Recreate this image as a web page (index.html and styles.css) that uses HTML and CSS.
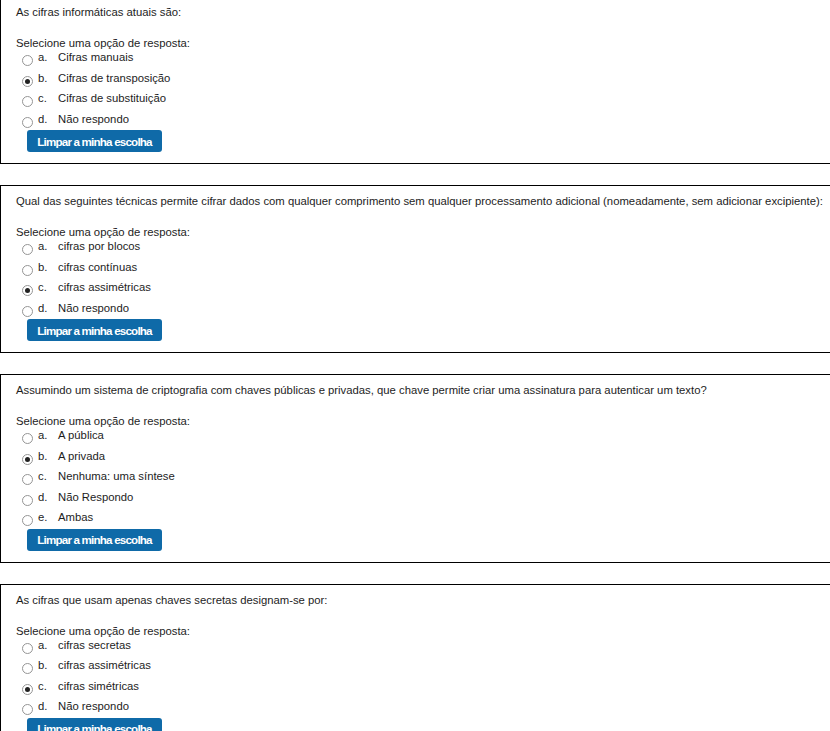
FILE: index.html
```html
<!DOCTYPE html>
<html lang="pt">
<head>
<meta charset="utf-8">
<title>Questionário</title>
<link rel="stylesheet" href="styles.css">
</head>
<body>
<div class="que">
  <div class="qtext">As cifras informáticas atuais são:</div>
  <div class="prompt">Selecione uma opção de resposta:</div>
  <div class="answer">
    <div class="opt"><span class="radio"></span><span class="letter">a.</span><span class="label">Cifras manuais</span></div>
    <div class="opt"><span class="radio checked"></span><span class="letter">b.</span><span class="label">Cifras de transposição</span></div>
    <div class="opt"><span class="radio"></span><span class="letter">c.</span><span class="label">Cifras de substituição</span></div>
    <div class="opt"><span class="radio"></span><span class="letter">d.</span><span class="label">Não respondo</span></div>
  </div>
  <button class="clear">Limpar a minha escolha</button>
</div>

<div class="que">
  <div class="qtext">Qual das seguintes técnicas permite cifrar dados com qualquer comprimento sem qualquer processamento adicional (nomeadamente, sem adicionar excipiente):</div>
  <div class="prompt">Selecione uma opção de resposta:</div>
  <div class="answer">
    <div class="opt"><span class="radio"></span><span class="letter">a.</span><span class="label">cifras por blocos</span></div>
    <div class="opt"><span class="radio"></span><span class="letter">b.</span><span class="label">cifras contínuas</span></div>
    <div class="opt"><span class="radio checked"></span><span class="letter">c.</span><span class="label">cifras assimétricas</span></div>
    <div class="opt"><span class="radio"></span><span class="letter">d.</span><span class="label">Não respondo</span></div>
  </div>
  <button class="clear">Limpar a minha escolha</button>
</div>

<div class="que">
  <div class="qtext">Assumindo um sistema de criptografia com chaves públicas e privadas, que chave permite criar uma assinatura para autenticar um texto?</div>
  <div class="prompt">Selecione uma opção de resposta:</div>
  <div class="answer">
    <div class="opt"><span class="radio"></span><span class="letter">a.</span><span class="label">A pública</span></div>
    <div class="opt"><span class="radio checked"></span><span class="letter">b.</span><span class="label">A privada</span></div>
    <div class="opt"><span class="radio"></span><span class="letter">c.</span><span class="label">Nenhuma: uma síntese</span></div>
    <div class="opt"><span class="radio"></span><span class="letter">d.</span><span class="label">Não Respondo</span></div>
    <div class="opt"><span class="radio"></span><span class="letter">e.</span><span class="label">Ambas</span></div>
  </div>
  <button class="clear">Limpar a minha escolha</button>
</div>

<div class="que">
  <div class="qtext">As cifras que usam apenas chaves secretas designam-se por:</div>
  <div class="prompt">Selecione uma opção de resposta:</div>
  <div class="answer">
    <div class="opt"><span class="radio"></span><span class="letter">a.</span><span class="label">cifras secretas</span></div>
    <div class="opt"><span class="radio"></span><span class="letter">b.</span><span class="label">cifras assimétricas</span></div>
    <div class="opt"><span class="radio checked"></span><span class="letter">c.</span><span class="label">cifras simétricas</span></div>
    <div class="opt"><span class="radio"></span><span class="letter">d.</span><span class="label">Não respondo</span></div>
  </div>
  <button class="clear">Limpar a minha escolha</button>
</div>
</body>
</html>
```

FILE: styles.css
```css
html, body {
  margin: 0;
  padding: 0;
  background: #ffffff;
  overflow: hidden;
}

body {
  font-family: "Liberation Sans", Arial, sans-serif;
  font-size: 11.3px;
  line-height: 14px;
  color: #1d1d1d;
}

.que {
  border: 1px solid #000;
  margin-right: -20px;
  padding: 8px 0 11px 15px;
  margin-bottom: 21px;
}

.que:first-child {
  margin-top: -4px;
}

.qtext {
  white-space: nowrap;
}

.prompt {
  margin-top: 17px;
}

.answer {
  display: flex;
  flex-direction: column;
}

.opt {
  display: flex;
  align-items: flex-start;
  height: 20.5px;
}

.radio {
  box-sizing: border-box;
  width: 11px;
  height: 11px;
  margin: 5px 5px 0 6px;
  border: 1px solid #959595;
  border-radius: 50%;
  background: #fff;
  display: flex;
  align-items: center;
  justify-content: center;
}

.radio.checked::after {
  content: "";
  width: 5px;
  height: 5px;
  border-radius: 50%;
  background: #222;
}

.letter {
  width: 20px;
}

.clear {
  display: block;
  margin: -2px 0 0 11px;
  width: 135px;
  height: 22px;
  padding: 0;
  border: none;
  border-radius: 3px;
  background: #0f6aa8;
  color: #fff;
  font-family: "Liberation Sans", Arial, sans-serif;
  font-size: 11.6px;
  font-weight: bold;
  letter-spacing: -0.8px;
  cursor: pointer;
}
```
